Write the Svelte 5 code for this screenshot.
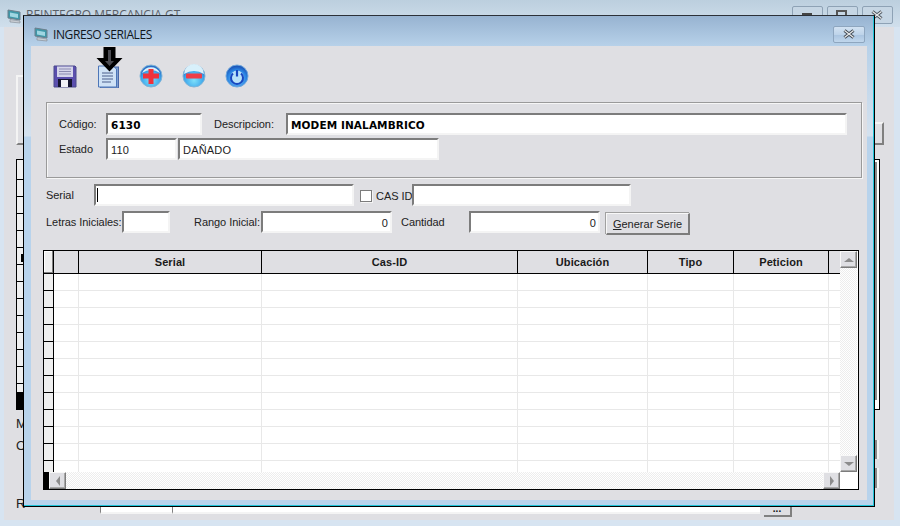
<script>
	let columns = ['', '', 'Serial', 'Cas-ID', 'Ubicación', 'Tipo', 'Peticion', '']
	let rows = Array.from({ length: 12 }, (_, i) => i)
	let parentRows = Array.from({ length: 13 }, (_, i) => i)
</script>

<div class="desktop">
	<!-- window behind the dialog, only slivers of it show -->
	<div class="parent">
		<div class="parent-title">
			<svg class="parent-icon" viewBox="0 0 14 15">
				<path d="M1 1 L13 3 V11 L1 9 Z" fill="#3f97a8" stroke="#6d7f8c" stroke-width="1" />
				<path d="M3 3.5 L11 5 V9 L3 7.5 Z" fill="#9fd6e2" />
				<path d="M3 10.5 L13 12 V14 L3 13 Z" fill="#c9ced4" stroke="#7d8790" stroke-width="0.6" />
			</svg>
			<span>REINTEGRO MERCANCIA GT</span>
			<div class="parent-buttons">
				<div class="parent-btn"><i class="dash"></i></div>
				<div class="parent-btn"><i class="square"></i></div>
				<div class="parent-btn">
					<svg class="parent-x" viewBox="0 0 12 10" width="12" height="10">
						<path d="M1.5 1.5 L10.5 8.5 M10.5 1.5 L1.5 8.5" stroke="#4a525c" stroke-width="3.2" />
						<path d="M1.5 1.5 L10.5 8.5 M10.5 1.5 L1.5 8.5" stroke="#e4e6e8" stroke-width="1.4" />
					</svg>
				</div>
			</div>
		</div>
		<div class="sliver btn-left"></div>
		<div class="sliver btn-right"></div>
		<div class="sliver table-left">
			{#each parentRows as r}
				<div class="p-row"></div>
			{/each}
			<div class="p-dark"></div>
		</div>
		<div class="sliver mark"></div>
		<div class="sliver table-right"></div>
		<div class="sliver edit-a"></div>
		<div class="sliver edit-b"></div>
		<span class="sliver letter l-m">M</span>
		<span class="sliver letter l-o">O</span>
		<span class="sliver letter l-r">R</span>
		<div class="sliver low-a"></div>
		<div class="sliver low-b"></div>
		<div class="sliver low-btn">...</div>
	</div>

	<div class="dialog">
		<div class="titlebar">
			<svg class="app-icon" viewBox="0 0 14 15">
				<path d="M1 1 L13 3 V11 L1 9 Z" fill="#3f97a8" stroke="#6d7f8c" stroke-width="1" />
				<path d="M3 3.5 L11 5 V9 L3 7.5 Z" fill="#9fd6e2" />
				<path d="M3 10.5 L13 12 V14 L3 13 Z" fill="#c9ced4" stroke="#7d8790" stroke-width="0.6" />
			</svg>
			<span class="title-text">INGRESO SERIALES</span>
			<div class="close">
				<svg viewBox="0 0 12 10" width="12" height="10">
					<path d="M1.5 1.5 L10.5 8.5 M10.5 1.5 L1.5 8.5" stroke="#3d4650" stroke-width="3.2" />
					<path d="M1.5 1.5 L10.5 8.5 M10.5 1.5 L1.5 8.5" stroke="#e4e6e8" stroke-width="1.4" />
				</svg>
			</div>
		</div>

		<div class="client">
			<div class="toolbar">
				<svg class="tool" viewBox="0 0 24 24">
					<path d="M1 2 H22 L23 3 V23 H1 Z" fill="#5b4fae" stroke="#4a4a8c" stroke-width="1" />
					<rect x="4" y="2.5" width="16" height="10.5" fill="#d5d5ea" />
					<path d="M6 5 H18 M6 7.5 H18 M6 10 H18" stroke="#8b8bb0" stroke-width="1" />
					<rect x="5" y="15" width="14" height="8" fill="#151530" />
					<rect x="8" y="16" width="7" height="7" fill="#f1f1f6" />
				</svg>
				<svg class="tool" viewBox="0 0 24 24">
					<rect x="4.5" y="3" width="18" height="21" fill="#7f9fd0" stroke="#4a68a8" />
					<path d="M2.5 2 H17 L20.5 5 V23 H2.5 Z" fill="#cfe2f6" stroke="#4d76b8" />
					<path d="M6 9 H17 M6 12 H17 M6 15 H17 M6 18 H15" stroke="#4a5f8c" stroke-width="1" />
				</svg>
				<svg class="tool" viewBox="0 0 24 24">
					<defs>
						<radialGradient id="ball" cx="50%" cy="70%" r="60%">
							<stop offset="0" stop-color="#7ee0fa" />
							<stop offset="0.7" stop-color="#3fa8ec" />
							<stop offset="1" stop-color="#2a6fc8" />
						</radialGradient>
						<radialGradient id="ballblue" cx="50%" cy="65%" r="60%">
							<stop offset="0" stop-color="#8fd0f8" />
							<stop offset="0.7" stop-color="#2a86e4" />
							<stop offset="1" stop-color="#1c55b8" />
						</radialGradient>
					</defs>
					<circle cx="12" cy="12" r="11" fill="url(#ball)" stroke="#7fb4d8" />
					<path d="M3 9 A10 10 0 0 1 21 9 Q12 3 3 9 Z" fill="#d8f0fb" />
					<path d="M9.5 5 H14.5 V9.5 H20 V14.5 H14.5 V20 H9.5 V14.5 H4 V9.5 H9.5 Z" fill="#f0323c" />
				</svg>
				<svg class="tool" viewBox="0 0 24 24">
					<circle cx="12" cy="12" r="11" fill="url(#ball)" stroke="#7fb4d8" />
					<path d="M2 10 A10 10 0 0 1 22 10 Q12 4 2 10 Z" fill="#d8f0fb" />
					<rect x="4" y="9.5" width="16" height="5" rx="1" fill="#ee3c48" />
				</svg>
				<svg class="tool" viewBox="0 0 24 24">
					<circle cx="12" cy="12" r="11" fill="url(#ballblue)" stroke="#6fa8dc" />
					<circle cx="12" cy="13" r="6.5" fill="#b8e2fa" />
					<path d="M8 9.5 A6 6 0 1 0 16 9.5" fill="none" stroke="#1848c0" stroke-width="2" />
					<path d="M12 6 V12.5" stroke="#1848c0" stroke-width="2.2" />
				</svg>
				<svg class="cursor" viewBox="0 0 27 26">
					<path d="M7.5 1 H19.5 V12 H26.5 L13.5 25.5 L0.5 12 H7.5 Z" fill="#000" />
					<path d="M12 4 H15 V15 H18 L13.5 20 L9 15 H12 Z" fill="#4a4a50" />
				</svg>
			</div>

			<fieldset class="group">
				<div class="line">
					<label class="lbl codigo">Código:</label>
					<div class="field strong w-codigo">6130</div>
					<label class="lbl desc">Descripcion:</label>
					<div class="field strong w-desc">MODEM INALAMBRICO</div>
				</div>
				<div class="line">
					<label class="lbl codigo">Estado</label>
					<div class="field w-estado">110</div>
					<div class="field w-danado">DAÑADO</div>
				</div>
			</fieldset>

			<div class="line serial-line">
				<label class="lbl serial">Serial</label>
				<div class="field w-serial"><i class="caret"></i></div>
				<span class="check"></span>
				<label class="lbl casid">CAS ID</label>
				<div class="field w-cas"></div>
			</div>

			<div class="line range-line">
				<label class="lbl letras">Letras Iniciales:</label>
				<div class="field w-letras"></div>
				<label class="lbl rango">Rango Inicial:</label>
				<div class="field num w-num">0</div>
				<label class="lbl cantidad">Cantidad</label>
				<div class="field num w-num">0</div>
				<button class="gen"><u>G</u>enerar Serie</button>
			</div>

			<div class="grid">
				<div class="grid-body">
					<div class="cols head">
						{#each columns as c, i}
							<div class="hcell" class:indicator={i === 0}>{c}</div>
						{/each}
					</div>
					{#each rows as r}
						<div class="cols row">
							{#each columns as c, i}
								<div class="cell" class:indicator={i === 0}></div>
							{/each}
						</div>
					{/each}
				</div>
				<div class="vbar">
					<div class="sbtn"><i class="arrow up"></i></div>
					<div class="sbtn"><i class="arrow down"></i></div>
				</div>
				<div class="hbar">
					<div class="hblock"></div>
					<div class="sbtn"><i class="arrow left"></i></div>
					<div class="track"></div>
					<div class="sbtn"><i class="arrow right"></i></div>
				</div>
				<div class="corner"></div>
			</div>
		</div>
	</div>
</div>

<style>
:global(body) {
	margin: 0;
	background: #d7e4f1;
}

.desktop {
	position: relative;
	width: 900px;
	height: 526px;
	overflow: hidden;
	font-family: "Liberation Sans", Arial, sans-serif;
	font-size: 11px;
	color: #111;
}

/* parent window */
.parent {
	position: absolute;
	inset: 0;
	background: #d7e4f1;
}

.parent::after {
	content: "";
	position: absolute;
	left: 4px;
	right: 6px;
	top: 27px;
	bottom: 6px;
	background: #dfdfe3;
}

.parent-title {
	position: relative;
	height: 27px;
	background: linear-gradient(#bccfde, #d0dfec);
	font-family: "Open Sans", sans-serif;
	font-size: 12px;
	color: #5a6068;
	z-index: 1;
}

.parent-title span {
	position: absolute;
	left: 26px;
	top: 6px;
}

.parent-icon {
	position: absolute;
	left: 7px;
	top: 9px;
	width: 14px;
	height: 15px;
}

.parent-buttons {
	position: absolute;
	left: 792px;
	top: 6px;
	display: flex;
	gap: 3px;
}

.parent-btn {
	width: 29px;
	height: 16px;
	margin-right: 1px;
	border: 1px solid #8ea2b5;
	border-radius: 2px;
	background: #c6d6e4;
	position: relative;
}

.dash {
	position: absolute;
	left: 9px;
	top: 6px;
	width: 10px;
	height: 3px;
	background: #444;
}

.square {
	position: absolute;
	left: 8px;
	top: 3px;
	width: 7px;
	height: 6px;
	border: 2px solid #555;
}

.parent-x {
	position: absolute;
	left: 8px;
	top: 3px;
}

.sliver {
	position: absolute;
	z-index: 1;
	box-sizing: border-box;
}

.btn-left {
	left: 16px;
	top: 75px;
	width: 10px;
	height: 70px;
	border: 2px solid #f4f4f4;
	border-bottom-color: #808080;
	background: #dfdfe3;
}

.btn-right {
	left: 872px;
	top: 122px;
	width: 12px;
	height: 23px;
	border: 2px solid #f4f4f4;
	border-right-color: #808080;
	border-bottom-color: #808080;
	background: #dfdfe3;
}

.table-left {
	left: 16px;
	top: 159px;
	width: 10px;
	height: 251px;
	border: 1px solid #000;
	background: #efefef;
	overflow: hidden;
}

.p-row {
	height: 16px;
	border-bottom: 1px solid #000;
}

.p-row:first-child {
	height: 19px;
}

.p-dark {
	position: absolute;
	left: 0;
	top: 232px;
	width: 100%;
	height: 18px;
	background: #000;
}

.mark {
	left: 21px;
	top: 254px;
	width: 4px;
	height: 8px;
	background: #000;
}

.table-right {
	left: 872px;
	top: 159px;
	width: 8px;
	height: 251px;
	border: 1px solid #000;
	border-left: 0;
	background: #fff;
}

.table-right::after {
	content: "";
	position: absolute;
	left: 3px;
	top: 2px;
	width: 2px;
	height: 238px;
	background: #8a8a8a;
}

.edit-a, .edit-b {
	left: 872px;
	width: 7px;
	border-right: 2px solid #f4f4f4;
	background: #f4f4f4;
	box-shadow: inset -2px 0 0 #8a8a8a;
}

.edit-a {
	top: 440px;
	height: 19px;
}

.edit-b {
	top: 468px;
	height: 20px;
}

.letter {
	font-size: 13px;
	color: #222;
	line-height: 14px;
}

.l-m { left: 16px; top: 417px; }
.l-o { left: 16px; top: 439px; }
.l-r { left: 16px; top: 497px; }

.low-a, .low-b {
	top: 505px;
	height: 9px;
	background: #fff;
	border-left: 1px solid #808080;
	border-bottom: 2px solid #f4f4f4;
}

.low-a {
	left: 100px;
	width: 72px;
}

.low-b {
	left: 172px;
	width: 588px;
}

.low-btn {
	left: 764px;
	top: 500px;
	width: 28px;
	height: 17px;
	background: #dfdfe3;
	border-right: 2px solid #808080;
	border-bottom: 2px solid #808080;
	text-align: center;
	font-weight: bold;
	font-size: 10px;
	line-height: 18px;
}

/* dialog */
.dialog {
	position: absolute;
	left: 23px;
	top: 15px;
	width: 852px;
	height: 492px;
	box-sizing: border-box;
	border: 1px solid #000;
	border-top-color: #2c3138;
	z-index: 2;
	box-shadow: inset -1px -1px 0 #1fc4d8;
	background: linear-gradient(#97b3d1 0, #b7d1e9 30px, #d4e1ee 120px, #b8d3ec 121px);
	padding: 0 7px 6px 7px;
	display: flex;
	flex-direction: column;
}

.titlebar {
	height: 30px;
	box-sizing: border-box;
	padding-top: 6px;
	flex: none;
	display: flex;
	align-items: center;
}

.app-icon {
	width: 14px;
	height: 15px;
	margin-left: 3px;
	margin-right: 5px;
}

.title-text {
	font-family: "Open Sans", sans-serif;
	font-size: 12px;
	letter-spacing: -0.4px;
	color: #10161c;
}

.close {
	margin-left: auto;
	margin-right: 2px;
	width: 30px;
	height: 15px;
	border: 1px solid #8ea6bf;
	border-radius: 2px;
	background: linear-gradient(#d2e2f2 0, #bed4ea 50%, #a9c4e0 51%, #c0d6ec 100%);
	display: flex;
	align-items: center;
	justify-content: center;
}

.client {
	flex: 1;
	background: #dfdfe3;
	min-height: 0;
	overflow: hidden;
}

.toolbar {
	position: relative;
	height: 56px;
	display: flex;
	align-items: flex-start;
	gap: 19px;
	padding: 18px 0 0 22px;
	box-sizing: border-box;
}

.tool {
	width: 24px;
	height: 24px;
	flex: none;
}

.cursor {
	position: absolute;
	left: 65px;
	top: 0;
	width: 27px;
	height: 26px;
}

.group {
	margin: 0 0 0 15px;
	padding: 10px 0 0 12px;
	width: 816px;
	height: 76px;
	box-sizing: border-box;
	border: 1px solid #9a9a9a;
	box-shadow: inset 1px 1px 0 #f6f6f6, 1px 1px 0 #f6f6f6;
}

.group .line + .line {
	margin-top: 3px;
}

.line {
	display: flex;
	align-items: flex-start;
}

.lbl {
	flex: none;
	height: 22px;
	line-height: 22px;
	font-size: 11px;
	letter-spacing: -0.05px;
	white-space: nowrap;
	color: #222;
}

.codigo { width: 47px; }
.desc { width: 72px; margin-left: 12px; }
.serial { width: 48px; }
.casid { width: 36px; margin-left: 4px; line-height: 25px; }
.letras { width: 76px; }
.rango { width: 67px; margin-left: 24px; }
.cantidad { width: 68px; margin-left: 9px; }

.field {
	flex: none;
	height: 22px;
	box-sizing: border-box;
	background: #fff;
	border: 2px solid;
	border-color: #7c7c7c #f4f4f4 #f4f4f4 #7c7c7c;
	padding: 0 3px;
	line-height: 20px;
	font-size: 11px;
	letter-spacing: 0.2px;
	color: #222;
	position: relative;
}

.strong {
	font-family: "DejaVu Sans", sans-serif;
	font-weight: bold;
	font-size: 10.5px;
	letter-spacing: 0.1px;
	line-height: 21px;
	color: #000;
}

.num {
	text-align: right;
	padding-right: 2px;
}

.w-codigo { width: 96px; }
.w-desc { width: 561px; }
.w-estado { width: 71px; margin-right: 1px; }
.w-danado { width: 261px; }
.w-serial { width: 260px; }
.w-cas { width: 219px; }
.w-letras { width: 48px; }
.w-num { width: 131px; }

.caret {
	position: absolute;
	left: 1px;
	top: 2px;
	width: 1px;
	height: 14px;
	background: #000;
}

.serial-line {
	margin: 6px 0 0 15px;
}

.range-line {
	margin: 5px 0 0 15px;
}

.check {
	flex: none;
	width: 12px;
	height: 12px;
	margin: 6px 0 0 6px;
	box-sizing: border-box;
	background: #fff;
	border: 1px solid #7c7c7c;
	box-shadow: 1px 1px 0 #f4f4f4;
}

.gen {
	flex: none;
	margin: 2px 0 0 6px;
	width: 84px;
	height: 22px;
	box-sizing: border-box;
	padding: 0;
	background: #dfdfe3;
	border: 1px solid #f8f8f8;
	border-right: 2px solid #7c7c7c;
	border-bottom: 2px solid #7c7c7c;
	box-shadow: -1px -1px 0 #a0a0a0;
	font-family: inherit;
	font-size: 11px;
	color: #222;
}

.grid {
	margin: 15px 0 0 12px;
	width: 816px;
	height: 240px;
	box-sizing: border-box;
	border: 1px solid #000;
	background: #fff;
	display: grid;
	grid-template-columns: 796px 18px;
	grid-template-rows: 221px 17px;
}

.grid-body {
	overflow: hidden;
}

.cols {
	display: grid;
	grid-template-columns: 10px 25px 183px 256px 130px 86px 95px 11px;
}

.head {
	height: 22px;
	background: #dfdfe3;
	border-bottom: 1px solid #000;
	font-weight: bold;
	font-size: 11px;
	letter-spacing: 0.1px;
}

.hcell {
	border-right: 1px solid #000;
	text-align: center;
	line-height: 22px;
	color: #1a1a1a;
}

.hcell:last-child {
	border-right: 0;
}

.hcell.indicator {
	background: #efefef;
	box-shadow: inset -1px -1px 0 #808080, inset 1px 1px 0 #fff;
}

.row {
	height: 17px;
	box-sizing: border-box;
	border-bottom: 1px solid #e8e8e8;
}

.cell {
	border-right: 1px solid #e8e8e8;
}

.cell:last-child {
	border-right: 0;
}

.cell.indicator {
	background: #efefef;
	border-right: 1px solid #000;
	box-shadow: 0 1px 0 #000;
}

.vbar {
	display: flex;
	flex-direction: column;
	justify-content: space-between;
	background: repeating-conic-gradient(#ededed 0 25%, #fff 0 50%) 0 0 / 2px 2px;
	margin-right: 1px;
}

.hbar {
	display: flex;
	background: #fff;
}

.hblock {
	width: 5px;
	background: #000;
}

.track {
	flex: 1;
	background: repeating-conic-gradient(#ededed 0 25%, #fff 0 50%) 0 0 / 2px 2px;
}

.corner {
	background: #fff;
}

.sbtn {
	width: 17px;
	height: 17px;
	box-sizing: border-box;
	background: #dfdfe3;
	border: 1px solid #f8f8f8;
	border-right: 1px solid #7c7c7c;
	border-bottom: 1px solid #7c7c7c;
	box-shadow: inset -1px -1px 0 #a8a8a8;
	display: flex;
	align-items: center;
	justify-content: center;
	flex: none;
}

.arrow {
	width: 0;
	height: 0;
	border: 4px solid transparent;
}

.arrow.up { border-top: 0; border-bottom: 4px solid #8c8c8c; border-left-width: 5px; border-right-width: 5px; }
.arrow.down { border-bottom: 0; border-top: 4px solid #8c8c8c; border-left-width: 5px; border-right-width: 5px; }
.arrow.left { border-left: 0; border-right: 4px solid #8c8c8c; border-top-width: 5px; border-bottom-width: 5px; }
.arrow.right { border-right: 0; border-left: 4px solid #8c8c8c; border-top-width: 5px; border-bottom-width: 5px; }
</style>
